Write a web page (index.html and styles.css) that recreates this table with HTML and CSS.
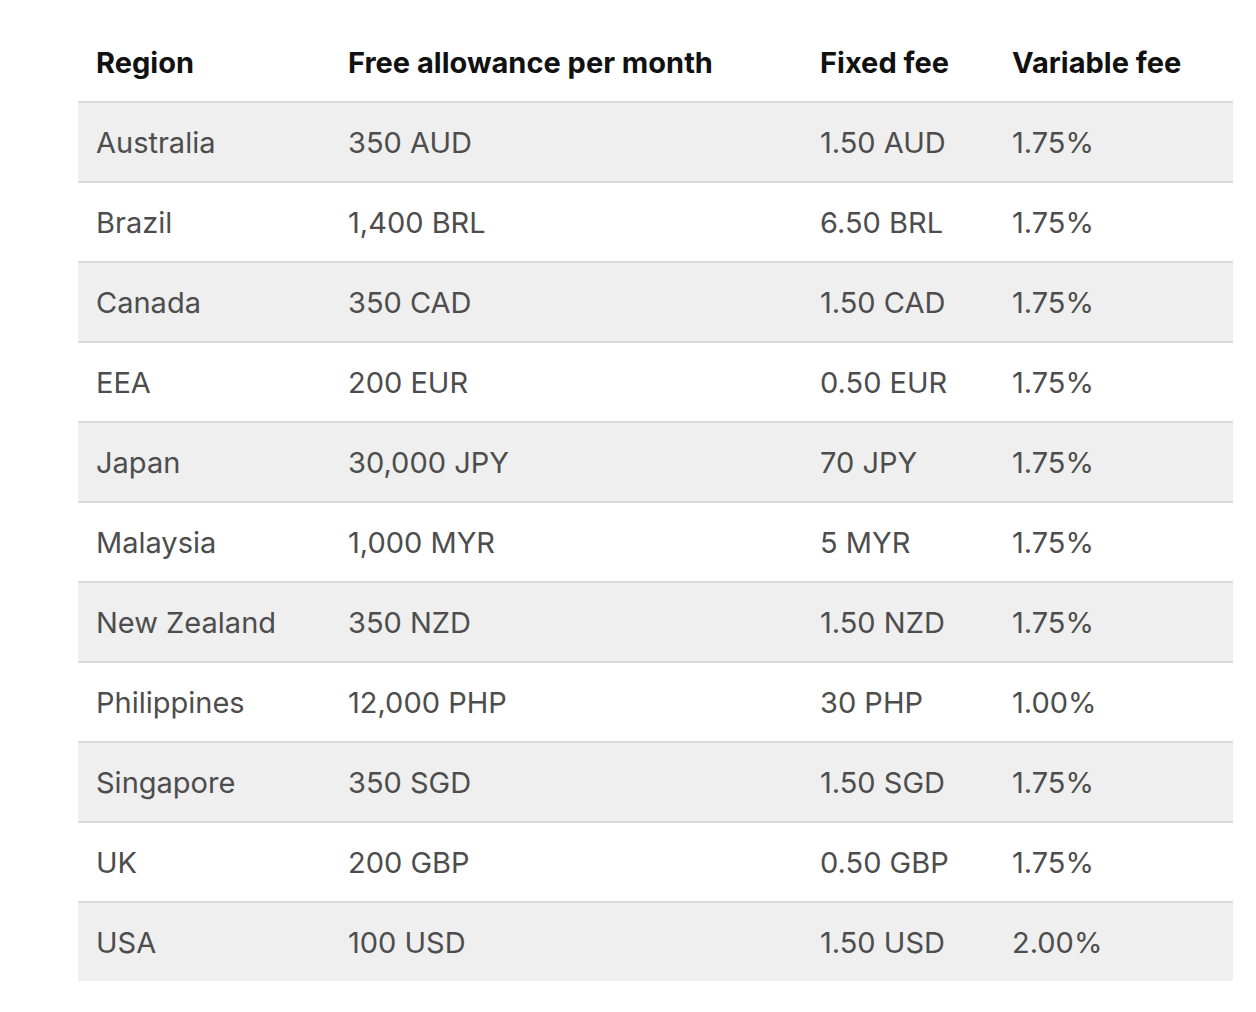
FILE: index.html
```html
<!DOCTYPE html>
<html>
<head>
<meta charset="utf-8">
<link rel="stylesheet" href="styles.css">
</head>
<body>
<div class="wrap">
<table class="fees">
<thead>
<tr><th class="c1">Region</th><th class="c2">Free allowance per month</th><th class="c3">Fixed fee</th><th class="c4">Variable fee</th></tr>
</thead>
<tbody>
<tr><td>Australia</td><td>350 AUD</td><td>1.50 AUD</td><td>1.75%</td></tr>
<tr><td>Brazil</td><td>1,400 BRL</td><td>6.50 BRL</td><td>1.75%</td></tr>
<tr><td>Canada</td><td>350 CAD</td><td>1.50 CAD</td><td>1.75%</td></tr>
<tr><td>EEA</td><td>200 EUR</td><td>0.50 EUR</td><td>1.75%</td></tr>
<tr><td>Japan</td><td>30,000 JPY</td><td>70 JPY</td><td>1.75%</td></tr>
<tr><td>Malaysia</td><td>1,000 MYR</td><td>5 MYR</td><td>1.75%</td></tr>
<tr><td>New Zealand</td><td>350 NZD</td><td>1.50 NZD</td><td>1.75%</td></tr>
<tr><td>Philippines</td><td>12,000 PHP</td><td>30 PHP</td><td>1.00%</td></tr>
<tr><td>Singapore</td><td>350 SGD</td><td>1.50 SGD</td><td>1.75%</td></tr>
<tr><td>UK</td><td>200 GBP</td><td>0.50 GBP</td><td>1.75%</td></tr>
<tr><td>USA</td><td>100 USD</td><td>1.50 USD</td><td>2.00%</td></tr>
</tbody>
</table>
</div>
</body>
</html>
```
FILE: styles.css
```css
html, body {
  margin: 0;
  padding: 0;
  background: #ffffff;
}
.wrap {
  padding: 23px 23px 0 78px;
}
.fees {
  width: 1155px;
  border-collapse: collapse;
  font-family: Inter, "Noto Sans", sans-serif;
  table-layout: fixed;
}
.fees th, .fees td {
  text-align: left;
  padding: 0 0 0 18px;
  white-space: nowrap;
}
.fees th {
  height: 78px;
  font-size: 29px;
  font-weight: 700;
  color: #111111;
}
.c1 { width: 234px; }
.c2 { width: 454px; }
.c3 { width: 174px; }
.c4 { width: 221px; }
.fees td {
  height: 78px;
  font-size: 29px;
  font-weight: 400;
  color: #4d4d4d;
  border-top: 2px solid #dadada;
}
.fees tbody tr:nth-child(odd) td {
  background: #eeefee;
}
```
